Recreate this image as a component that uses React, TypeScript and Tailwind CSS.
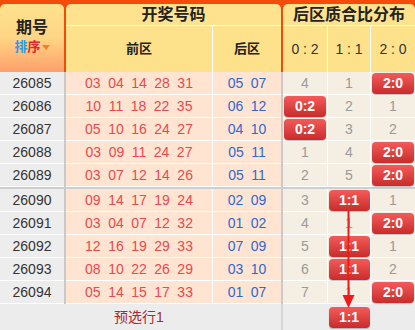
import React from 'react';

type Row = {
    id: string;
    front: string[];
    back: string[];
    dist: (string | number)[];
    hit: number;
};

const rows: Row[] = [
    { id: '26085', front: ['03', '04', '14', '28', '31'], back: ['05', '07'], dist: [4, 1, '2:0'], hit: 2 },
    { id: '26086', front: ['10', '11', '18', '22', '35'], back: ['06', '12'], dist: ['0:2', 2, 1], hit: 0 },
    { id: '26087', front: ['05', '10', '16', '24', '27'], back: ['04', '10'], dist: ['0:2', 3, 2], hit: 0 },
    { id: '26088', front: ['03', '09', '11', '24', '27'], back: ['05', '11'], dist: [1, 4, '2:0'], hit: 2 },
    { id: '26089', front: ['03', '07', '12', '14', '26'], back: ['05', '11'], dist: [2, 5, '2:0'], hit: 2 },
    { id: '26090', front: ['09', '14', '17', '19', '24'], back: ['02', '09'], dist: [3, '1:1', 1], hit: 1 },
    { id: '26091', front: ['03', '04', '07', '12', '32'], back: ['01', '02'], dist: [4, 1, '2:0'], hit: 2 },
    { id: '26092', front: ['12', '16', '19', '29', '33'], back: ['07', '09'], dist: [5, '1:1', 1], hit: 1 },
    { id: '26093', front: ['08', '10', '22', '26', '29'], back: ['03', '10'], dist: [6, '1:1', 2], hit: 1 },
    { id: '26094', front: ['05', '14', '15', '17', '33'], back: ['01', '07'], dist: [7, 1, '2:0'], hit: 2 },
];

const distWidths = ['w-[44px]', 'w-[42px]', 'w-[44px]'];

function Badge({ label, small }: { label: string; small?: boolean }) {
    return (
        <div
            className={`${small ? 'w-[41px]' : 'w-[42px]'} h-[21px] flex items-center justify-center rounded-[4px] bg-linear-to-b from-[#f45a5a] to-[#c82b2b] text-white text-[14px] font-bold shadow-[0_1px_1px_rgba(0,0,0,0.25)]`}
        >
            {label}
        </div>
    );
}

function DataRow({ row }: { row: Row }) {
    return (
        <div className="flex h-[23px]">
            <div className="w-[64px] bg-[#eeeded] border-b border-white flex items-center justify-center text-[14px] text-[#333]">
                {row.id}
            </div>
            <div className="w-[2px] bg-[#c9c9c9]" />
            <div className="w-[146px] bg-[#ffe4d1] border-b border-white flex items-center justify-center gap-[7.5px] text-[14px] text-[#e64a4f]">
                {row.front.map((n, i) => (
                    <span key={i}>{n}</span>
                ))}
            </div>
            <div className="w-[1px] bg-white" />
            <div className="w-[68px] bg-[#ffe4d1] border-b border-white flex items-center justify-center gap-[7.5px] text-[14px] text-[#2f68d2]">
                {row.back.map((n, i) => (
                    <span key={i}>{n}</span>
                ))}
            </div>
            <div className="w-[2px] bg-[#c9c9c9]" />
            {row.dist.map((d, i) => (
                <React.Fragment key={i}>
                    {i > 0 && <div className="w-[1px] bg-white" />}
                    <div className={`${distWidths[i]} bg-[#f5eee3] border-b border-white flex items-center justify-center text-[14px] text-[#9a9a9a]`}>
                        {i === row.hit ? <Badge label={String(d)} small={i === 1} /> : d}
                    </div>
                </React.Fragment>
            ))}
        </div>
    );
}

export default function App() {
    return (
        <div className="relative w-[415px] h-[330px] overflow-hidden bg-[#ececec] font-['Liberation_Sans','Noto_Sans_CJK_SC',sans-serif]">
            {/* Header */}
            <div className="flex h-[72px] bg-[#f24c0a] pt-[4px]">
                <div className="w-[64px] rounded-t-[5px] bg-linear-to-b from-[#fee28d] via-[#fed584] to-[#fd9f6b] flex flex-col items-center justify-center pb-[2px]">
                    <div className="text-[16px] font-bold text-[#222] leading-[20px]">期号</div>
                    <div className="flex items-center text-[13px] font-bold leading-[18px]">
                        <span className="text-[#2d98ee]">排</span>
                        <span className="text-[#e0262a]">序</span>
                        <span className="ml-[1px] w-0 h-0 border-l-[4px] border-r-[4px] border-t-[5px] border-l-transparent border-r-transparent border-t-[#f2801e]" />
                    </div>
                </div>
                <div className="w-[2px]" />
                <div className="w-[215px] flex flex-col">
                    <div className="h-[21px] rounded-t-[5px] bg-[#fee28e] flex items-center justify-center text-[16px] font-bold text-[#222]">
                        开奖号码
                    </div>
                    <div className="h-[1px] bg-white" />
                    <div className="flex h-[46px]">
                        <div className="w-[146px] bg-[#fee18b] flex items-center justify-center text-[13px] font-bold text-[#222]">前区</div>
                        <div className="w-[1px] bg-white" />
                        <div className="w-[68px] bg-[#fee18b] flex items-center justify-center text-[13px] font-bold text-[#222]">后区</div>
                    </div>
                </div>
                <div className="w-[2px]" />
                <div className="w-[132px] flex flex-col">
                    <div className="h-[21px] rounded-t-[5px] bg-[#fee28e] flex items-center justify-center text-[16px] font-bold text-[#222]">
                        后区质合比分布
                    </div>
                    <div className="h-[1px] bg-white" />
                    <div className="flex h-[46px] text-[14px] text-[#333]">
                        <div className="w-[44px] bg-[#fee18b] flex items-center justify-center">0 : 2</div>
                        <div className="w-[1px] bg-white" />
                        <div className="w-[42px] bg-[#fee18b] flex items-center justify-center">1 : 1</div>
                        <div className="w-[1px] bg-white" />
                        <div className="w-[44px] bg-[#fee18b] flex items-center justify-center">2 : 0</div>
                    </div>
                </div>
            </div>

            {/* Rows */}
            {rows.slice(0, 5).map((r) => (
                <DataRow key={r.id} row={r} />
            ))}
            <div className="h-[2px] bg-[#cfcfcf]" />
            {rows.slice(5).map((r) => (
                <DataRow key={r.id} row={r} />
            ))}

            {/* Footer */}
            <div className="flex h-[26px] bg-[#ececec]">
                <div className="w-[66px]" />
                <div className="w-[146px] flex items-center justify-center text-[14px] text-[#a5292e]">预选行1</div>
                <div className="w-[69px]" />
                <div className="w-[2px] bg-[#d6d6d6]" />
                <div className="w-[44px]" />
                <div className="w-[1px]" />
                <div className="w-[42px] flex items-center justify-center">
                    <Badge label="1:1" small />
                </div>
                <div className="w-[1px]" />
                <div className="w-[44px]" />
            </div>

            {/* Arrow */}
            <svg className="absolute left-0 top-0 pointer-events-none" width="415" height="330" viewBox="0 0 415 330">
                <line x1="348.5" y1="211" x2="348.5" y2="298" stroke="#ee1b1b" strokeWidth="2" />
                <polygon points="342.5,295 354.5,295 348.5,308" fill="#ee1b1b" />
            </svg>
        </div>
    );
}
